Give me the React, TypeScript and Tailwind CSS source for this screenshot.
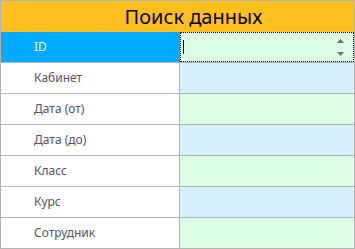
const rows = [
  { label: "ID", value: "bg-[#dcfce4]" },
  { label: "Кабинет", value: "bg-[#d6efff]" },
  { label: "Дата (от)", value: "bg-[#dcfce4]" },
  { label: "Дата (до)", value: "bg-[#d6efff]" },
  { label: "Класс", value: "bg-[#dcfce4]" },
  { label: "Курс", value: "bg-[#d6efff]" },
  { label: "Сотрудник", value: "bg-[#dcfce4]" },
];

const SpinArrows = () => (
  <div className="flex flex-col items-center gap-[9px] pr-[9px]">
    <svg width="7" height="4" viewBox="0 0 7 4">
      <path d="M3.5 0 L7 4 L0 4 Z" fill="#6b6b6b" />
    </svg>
    <svg width="7" height="4" viewBox="0 0 7 4">
      <path d="M0 0 L7 0 L3.5 4 Z" fill="#6b6b6b" />
    </svg>
  </div>
);

export default function App() {
  return (
    <div className="w-[355px] h-[249px] border border-[#b4b4b4] bg-white flex flex-col font-['Noto_Sans',sans-serif]">
      <div className="h-[31px] bg-[#ffbf1f] flex items-center justify-center pl-[32px] text-[20px] text-black leading-none">
        Поиск данных
      </div>
      {rows.map((r, i) => {
        const first = i === 0;
        const last = i === rows.length - 1;
        return (
          <div
            key={r.label}
            className={`flex ${last ? "h-[30px]" : "h-[31px] border-b border-[#b4b4b4]"}`}
          >
            <div
              className={`w-[179px] flex items-center pl-[33px] text-[12px] ${
                first ? "bg-[#00aaff] text-white" : "bg-white text-[#555] border-r border-[#b4b4b4]"
              }`}
            >
              {r.label}
            </div>
            {first ? (
              <div className={`flex-1 ${r.value} border border-dotted border-black flex items-center justify-between`}>
                <div className="w-px h-[14px] bg-black ml-[2px]" />
                <SpinArrows />
              </div>
            ) : (
              <div className={`flex-1 ${r.value}`} />
            )}
          </div>
        );
      })}
    </div>
  );
}
